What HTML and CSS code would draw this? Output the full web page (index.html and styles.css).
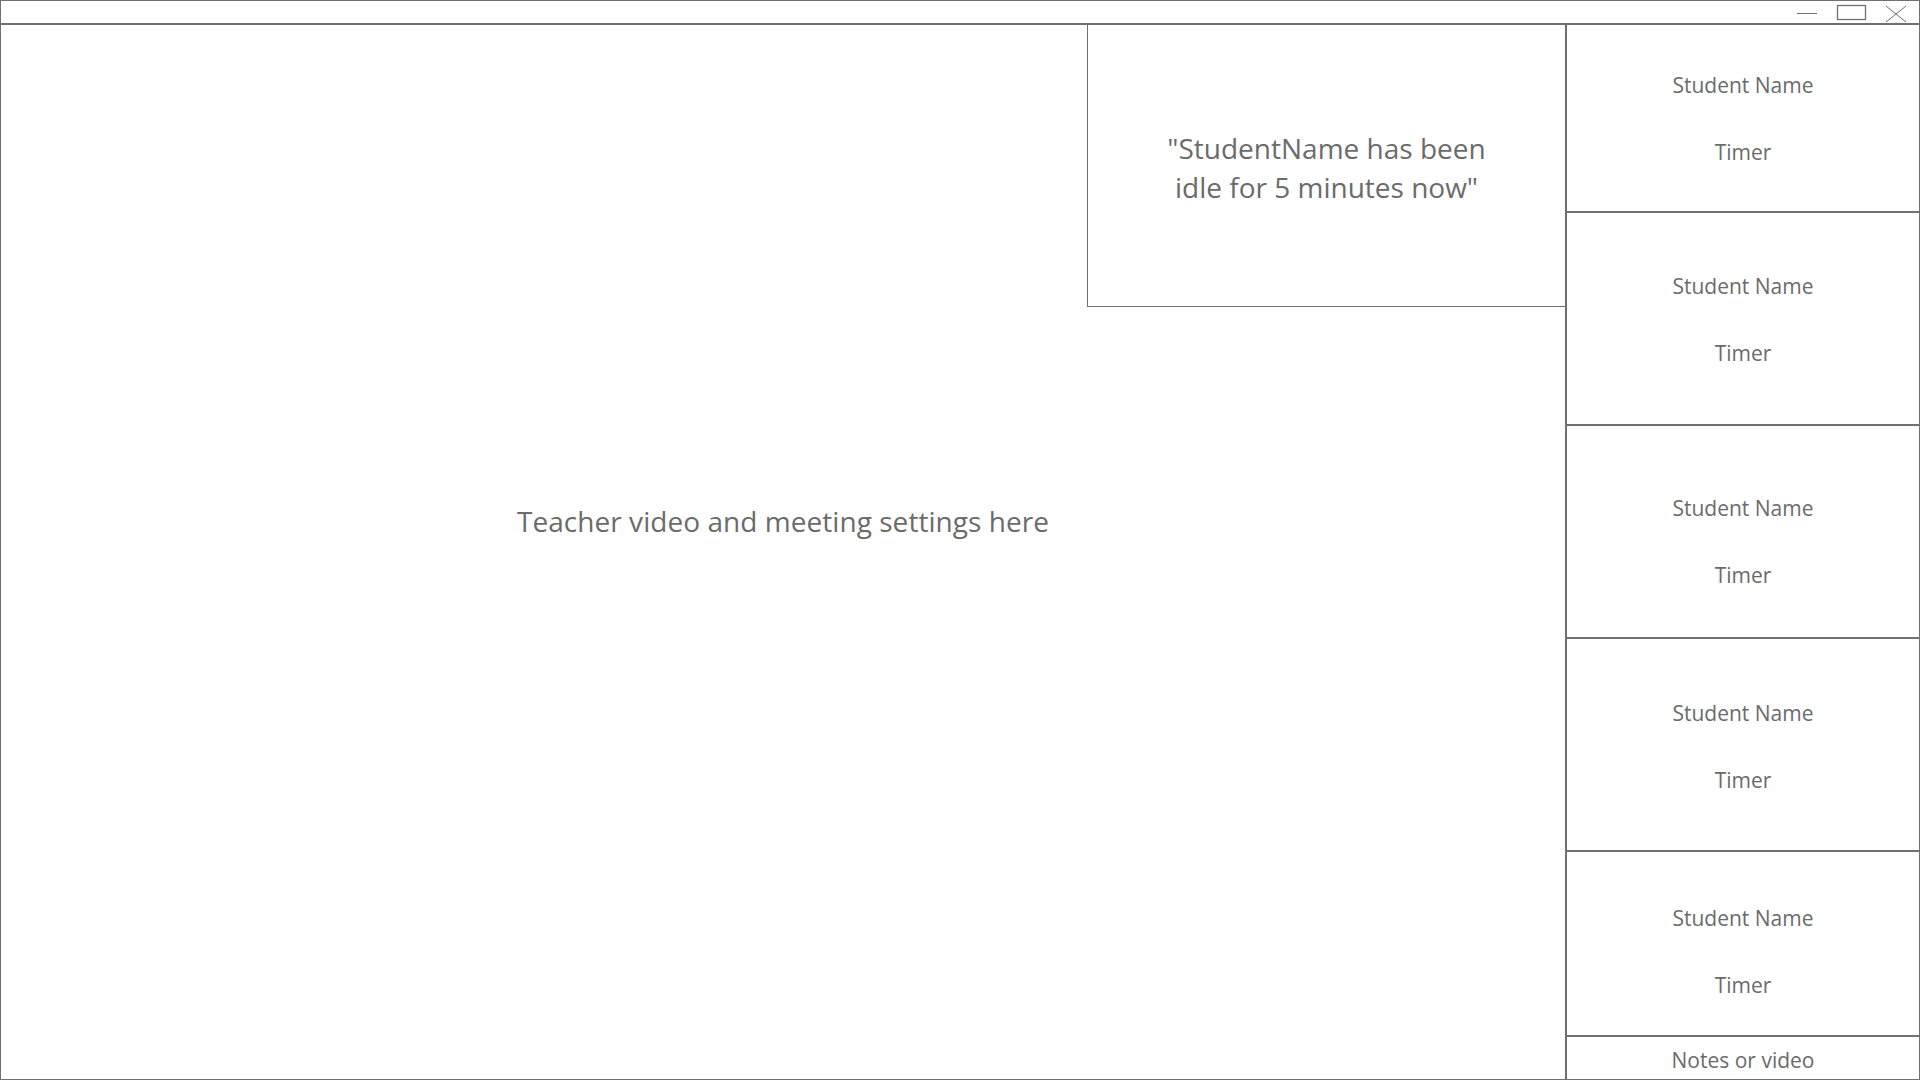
FILE: index.html
```html
<!DOCTYPE html>
<html>
<head>
<meta charset="utf-8">
<link rel="stylesheet" href="styles.css">
</head>
<body>
<div class="window">
  <div class="titlebar">
    <svg class="controls" width="160" height="23" viewBox="0 0 160 23">
      <line x1="38" y1="12.5" x2="58" y2="12.5" stroke="#707070" stroke-width="1"/>
      <rect x="78.5" y="4.5" width="28" height="14" fill="none" stroke="#707070" stroke-width="1.3"/>
      <path d="M127 5 L147 21 M147 5 L127 21" stroke="#707070" stroke-width="1" fill="none"/>
    </svg>
  </div>
  <div class="content">
    <div class="main">
      <div class="main-label">Teacher video and meeting settings here</div>
      <div class="toast">"StudentName has been<br>idle for 5 minutes now"</div>
    </div>
    <div class="sidebar">
      <div class="card"><span>Student Name</span><span>Timer</span></div>
      <div class="card"><span>Student Name</span><span>Timer</span></div>
      <div class="card"><span>Student Name</span><span>Timer</span></div>
      <div class="card"><span>Student Name</span><span>Timer</span></div>
      <div class="card"><span>Student Name</span><span>Timer</span></div>
      <div class="notes">Notes or video</div>
    </div>
  </div>
</div>
</body>
</html>
```
FILE: styles.css
```css
html, body {
  margin: 0;
  padding: 0;
  background: #fff;
}
body {
  font-family: "Open Sans", "Noto Sans", sans-serif;
  color: #6b6b6b;
}
.window {
  width: 1920px;
  height: 1080px;
  box-sizing: border-box;
  border: 1px solid #707070;
  display: flex;
  flex-direction: column;
}
.titlebar {
  height: 22px;
  border-bottom: 2px solid #707070;
  position: relative;
}
.controls {
  position: absolute;
  right: 0;
  top: 0;
}
.content {
  flex: 1;
  display: flex;
  min-height: 0;
}
.main {
  flex: 1;
  position: relative;
  display: flex;
  align-items: center;
  justify-content: center;
  padding-bottom: 62px;
}
.main-label {
  font-size: 28px;
  letter-spacing: 0.05px;
}
.toast {
  position: absolute;
  top: 0;
  right: 0;
  width: 478px;
  height: 282px;
  border-left: 1px solid #707070;
  border-bottom: 1px solid #707070;
  display: flex;
  align-items: center;
  justify-content: center;
  text-align: center;
  font-size: 28px;
  line-height: 39px;
  padding-top: 4px;
  box-sizing: border-box;
}
.sidebar {
  width: 352px;
  border-left: 2px solid #707070;
  display: flex;
  flex-direction: column;
}
.card {
  box-sizing: border-box;
  border-bottom: 2px solid #707070;
  display: flex;
  flex-direction: column;
  align-items: center;
  justify-content: center;
  gap: 40px;
  font-size: 21px;
  line-height: 27px;
}
.card:nth-child(1) { height: 188px; padding-top: 2px; }
.card:nth-child(2) { height: 213px; padding-top: 2px; }
.card:nth-child(3) { height: 213px; padding-top: 20px; }
.card:nth-child(4) { height: 213px; padding-top: 4px; }
.card:nth-child(5) { height: 185px; padding-top: 16px; }
.notes {
  flex: 1;
  display: flex;
  align-items: center;
  justify-content: center;
  font-size: 21px;
  padding-top: 3px;
}
```
